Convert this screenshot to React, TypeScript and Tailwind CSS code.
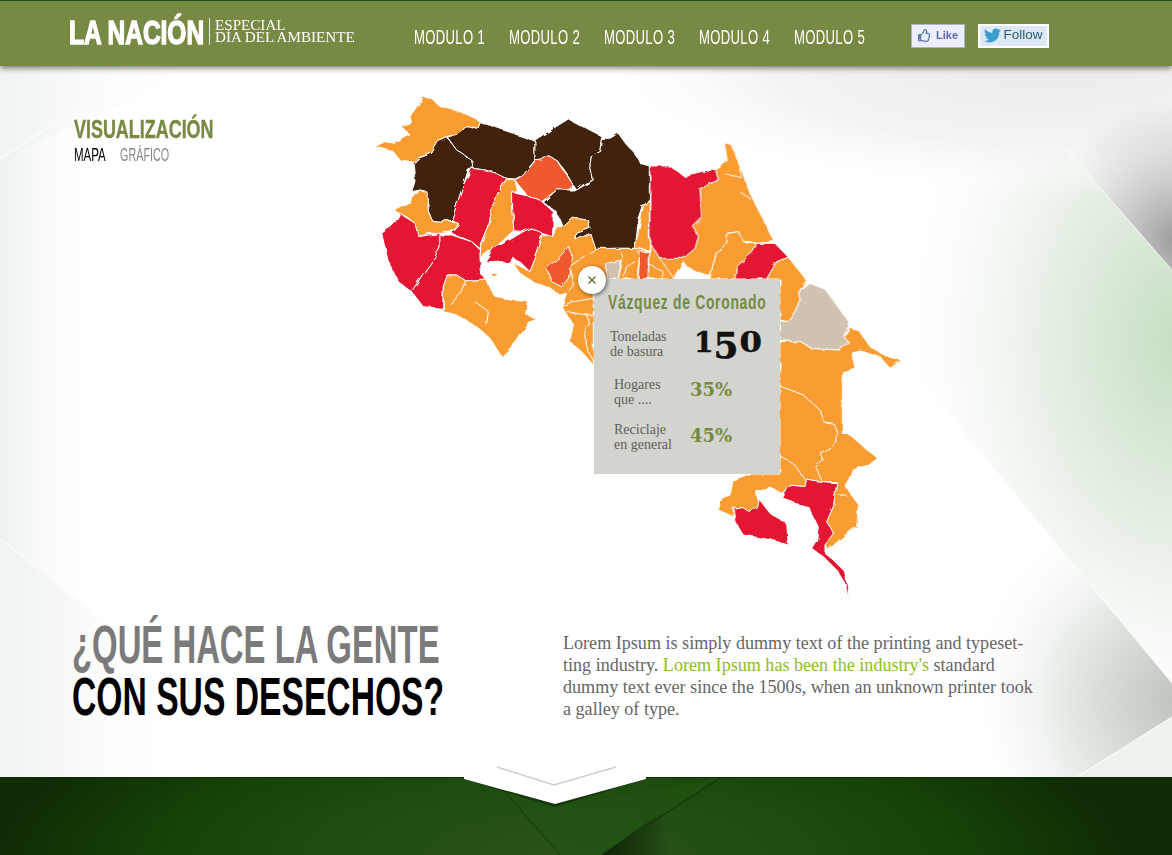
import { X } from "lucide-react";
import { FaTwitter, FaRegThumbsUp } from "react-icons/fa";

const ORANGE = "#f99d33";
const RED = "#e41230";
const BROWN = "#3f210b";
const EMBER = "#ee5a2e";
const BEIGE = "#d2c3b0";

type Region = [string, string];

// coordinates traced from the reference, group offset is in the <g> transform
const westRegions: Region[] = [
  [ORANGE, "190,37 215,40 240,65 300,80 358,108 350,130 320,122 295,150 262,158 235,170 215,205 175,218 165,232 120,225 100,200 45,185 75,170 105,175 150,150 125,125 155,115 150,95"],
  [BROWN, "262,158 290,195 335,225 340,250 325,255 310,300 295,345 275,405 250,400 245,412 220,410 205,375 200,320 180,315 155,320 165,290 160,235 175,220 215,205 235,170"],
  [BROWN, "358,110 525,168 525,225 490,270 465,282 440,280 410,265 375,255 340,250 335,225 290,195 265,160 295,150 320,122 350,130"],
  [BROWN, "525,165 625,102 725,155 720,195 695,210 690,240 700,285 675,295 650,315 640,300 610,250 590,225 565,212 545,225 525,228"],
  [EMBER, "565,212 590,225 610,255 640,300 625,315 590,315 570,330 545,350 500,330 465,285 490,270 525,228 545,225"],
  [BROWN, "775,145 800,180 825,205 840,235 868,243 868,340 850,365 835,410 825,490 770,490 705,492 695,470 690,445 650,465 648,445 690,430 685,405 640,400 610,425 590,380 550,352 590,315 625,315 650,315 700,285 690,240 695,210 720,195 725,160 750,160"],
  [RED, "335,250 375,255 410,265 440,280 405,340 395,375 385,430 360,490 335,470 300,455 275,445 300,420 275,405 295,345 310,300"],
  [ORANGE, "440,282 465,285 472,315 455,320 455,370 462,435 420,475 380,505 360,520 362,490 385,430 395,375 405,340"],
  [RED, "455,320 500,330 545,350 580,380 578,455 545,445 510,430 490,440 462,437 455,370"],
  [ORANGE, "180,315 200,320 205,375 220,410 245,412 255,400 300,420 275,440 245,445 210,445 175,455 165,415 140,395 100,375 150,350"],
  [RED, "120,385 165,415 175,455 240,445 240,490 215,530 190,565 155,620 115,590 85,530 65,445 100,420"],
  [RED, "240,450 275,450 335,470 360,495 360,520 365,570 380,585 320,590 290,570 262,570 250,605 248,670 190,665 155,620 190,565 215,530 240,490"],
  [RED, "510,430 545,445 550,450 530,510 510,560 480,530 460,520 440,535 410,525 375,530 400,490 440,470 490,440"],
  [ORANGE, "578,455 590,425 610,425 640,400 685,405 690,430 650,445 648,465 690,445 705,490 770,490 835,490 868,500 868,582 700,582 700,840 665,800 630,770 640,720 605,665 620,625 600,630 570,610 520,590 480,565 455,530 510,560 530,510 550,450"],
  [EMBER, "625,485 635,510 625,580 605,605 575,590 560,550 600,515"],
  [ORANGE, "868,342 868,495 825,490 850,365"],
  [EMBER, "840,500 868,500 868,582 835,582"],
  [BEIGE, "740,535 785,525 775,582 738,582"],
  [ORANGE, "250,605 262,570 290,570 320,590 380,585 400,630 450,645 505,650 500,690 525,700 495,730 470,770 425,815 390,760 350,725 290,690 250,680"],
  [ORANGE, "385,560 420,570 400,575"],
];

const westLines = [
  "320,590 305,625 260,665",
  "345,650 385,680 380,720",
  "610,660 640,650 700,640",
  "620,680 680,690 700,690",
  "680,690 690,720 670,745 685,800 700,830",
  "625,620 640,600 628,545 705,492",
  "780,495 790,520 775,580",
  "830,495 840,510 830,580",
  "825,530 800,545 790,580",
];

const eastRegions: Region[] = [
  [ORANGE, "30,340 60,385 130,395 100,447 0,447 28,447"],
  [ORANGE, "255,38 275,45 300,110 330,190 380,290 405,335 350,340 305,330 295,305 262,310 260,340 230,365 210,440 140,410 130,395 100,445 60,385 130,385 165,355 175,320 160,290 185,265 180,175 235,150 225,115 265,95"],
  [RED, "30,108 90,108 135,140 200,125 225,115 235,150 180,175 185,265 160,290 175,320 165,355 130,385 60,385 30,340"],
  [ORANGE, "262,310 295,305 310,335 350,340 340,365 290,410 285,447 210,447 230,365 260,340"],
  [RED, "350,340 405,340 445,382 410,395 380,447 285,447 290,410 340,365"],
  [ORANGE, "445,382 500,450 480,480 480,510 465,545 440,575 420,570 420,447 380,447 410,395"],
  [ORANGE, "630,592 660,605 690,650 740,680 785,690 750,715 720,680 660,660 635,665 645,715 607,725 607,780 420,780 420,635 480,635 515,655 600,660 625,635 610,620"],
  [BEIGE, "505,458 555,478 630,580 610,620 625,635 600,660 515,655 480,635 420,632 420,572 440,575 465,545 480,510 480,480"],
];

const eastLines = [
  "30,405 70,425 65,447",
  "130,395 130,447",
  "130,410 210,445",
  "300,110 300,140 260,135",
  "305,190 330,205",
];

const southRegions: Region[] = [
  [ORANGE, "240,0 427,0 427,160 450,165 490,200 530,232 500,255 460,270 450,300 438,320 475,375 470,440 430,470 385,510 375,490 400,460 380,425 400,380 410,305 365,305 320,298 315,320 270,315 245,340 215,325 170,335 175,380 150,400 125,380 100,385 100,410 55,390 65,355 90,345 100,300 140,285 145,282 240,282"],
  [RED, "175,355 190,375 215,405 260,430 265,495 215,480 130,465 105,425 100,385 125,380 150,398 170,380"],
  [RED, "320,298 365,305 410,308 400,380 380,425 400,460 375,495 375,520 405,545 430,570 445,625 445,655 435,610 410,570 370,530 335,505 350,480 355,440 345,420 325,380 285,370 245,350 265,315 315,320"],
];

const southLines = [
  "240,18 310,45 365,95 370,125 400,130 412,160 410,190 360,220 370,240 350,265 365,305",
  "240,228 280,250 315,298",
  "412,345 440,345",
];

function Group({ x, y, regions, lines }: { x: number; y: number; regions: Region[]; lines: string[] }) {
  return (
    <g transform={`translate(${x} ${y}) scale(0.3333)`} stroke="#fff" strokeWidth={3} strokeLinejoin="round">
      {regions.map(([fill, points], i) => (
        <polygon key={i} fill={fill} points={points} />
      ))}
      {lines.map((points, i) => (
        <polyline key={i} fill="none" points={points} />
      ))}
    </g>
  );
}

function CostaRicaMap() {
  return (
    <svg className="absolute left-[360px] top-[19px]" width="560" height="530" viewBox="360 85 560 530">
      <defs>
        <filter id="rough" x="0" y="0" width="100%" height="100%">
          <feTurbulence type="fractalNoise" baseFrequency="0.09" numOctaves="2" seed="4" />
          <feDisplacementMap in="SourceGraphic" scale="5" />
        </filter>
      </defs>
      <g filter="url(#rough)">
        <Group x={360} y={85} regions={westRegions} lines={westLines} />
        <Group x={640} y={130} regions={eastRegions} lines={eastLines} />
        <Group x={700} y={380} regions={southRegions} lines={[]} />
        {/* hides the seam where the south group meets the east group */}
        <rect x="782" y="376" width="59" height="8" fill={ORANGE} />
        <Group x={700} y={380} regions={[]} lines={southLines} />
      </g>
    </svg>
  );
}

function Backdrop() {
  return (
    <svg className="absolute inset-0" width="1172" height="711" viewBox="0 66 1172 711">
      <defs>
        <radialGradient id="topGray" gradientUnits="userSpaceOnUse" cx="1050" cy="66" r="460" gradientTransform="translate(0 47.5) scale(1 .28)">
          <stop offset="0" stopColor="#ebebea" />
          <stop offset=".6" stopColor="#f3f3f2" />
          <stop offset="1" stopColor="#fff" stopOpacity="0" />
        </radialGradient>
        <radialGradient id="wedge" gradientUnits="userSpaceOnUse" cx="1180" cy="240" r="140">
          <stop offset="0" stopColor="#999" />
          <stop offset="1" stopColor="#bbb" stopOpacity="0" />
        </radialGradient>
        <radialGradient id="greenFacet" gradientUnits="userSpaceOnUse" cx="1180" cy="340" r="290" gradientTransform="translate(0 -153) scale(1 1.45)">
          <stop offset="0" stopColor="#c6dec4" />
          <stop offset=".3" stopColor="#dbe9d9" />
          <stop offset=".6" stopColor="#f0f5ef" />
          <stop offset="1" stopColor="#fff" stopOpacity="0" />
        </radialGradient>
        <radialGradient id="lowGray" gradientUnits="userSpaceOnUse" cx="1180" cy="700" r="220">
          <stop offset="0" stopColor="#bcc4bc" />
          <stop offset=".5" stopColor="#e2e8e2" />
          <stop offset="1" stopColor="#fff" stopOpacity="0" />
        </radialGradient>
        <linearGradient id="leftEdge" x1="0" x2="1" y1="0" y2="0">
          <stop offset="0" stopColor="#edf2ee" />
          <stop offset="1" stopColor="#fff" stopOpacity="0" />
        </linearGradient>
        <linearGradient id="leftTop" x1="0" x2="1" y1="0" y2="0">
          <stop offset="0" stopColor="#f0f5f1" />
          <stop offset="1" stopColor="#fff" stopOpacity="0" />
        </linearGradient>
        <linearGradient id="leftLow" x1="0" x2="1" y1="0" y2="0">
          <stop offset="0" stopColor="#eff4f0" />
          <stop offset="1" stopColor="#fff" stopOpacity="0" />
        </linearGradient>
      </defs>
      <rect x="0" y="66" width="1172" height="711" fill="#fff" />
      <rect x="0" y="66" width="100" height="711" fill="url(#leftEdge)" />
      <polygon points="0,66 210,66 0,159" fill="url(#leftTop)" />
      <polygon points="0,538 130,640 200,777 0,777" fill="url(#leftLow)" />
      <polygon points="800,66 1000,66 1067,150 1172,270 1172,683 900,356 800,260" fill="url(#greenFacet)" />
      <rect x="600" y="66" width="572" height="130" fill="url(#topGray)" />
      <polygon points="1000,66 1172,66 1172,270 1067,150" fill="url(#wedge)" />
      <polygon points="900,356 1172,683 1172,717 1077,777 1000,777" fill="url(#lowGray)" />
      <polygon points="1172,717 1172,777 1077,777" fill="#edf2ed" />
      <polyline points="1067,150 1172,270" fill="none" stroke="#fff" strokeOpacity=".8" />
      <polyline points="900,356 1172,683" fill="none" stroke="#fff" strokeOpacity=".7" />
      <polyline points="1077,777 1172,717" fill="none" stroke="#fff" />
      <polyline points="0,159 120,80" fill="none" stroke="#fff" />
      <polyline points="0,538 100,620" fill="none" stroke="#fff" />
    </svg>
  );
}

function Cond({ scale, children }: { scale: string; children: React.ReactNode }) {
  return <span className={`inline-block origin-left whitespace-nowrap ${scale}`}>{children}</span>;
}

function StatRow({ label, second, value, labelWidth, extra }: { label: string; second: string; value: React.ReactNode; labelWidth: string; extra: string }) {
  return (
    <div className={`flex items-center ${extra}`}>
      <p className={`font-['Liberation_Serif',serif] text-[14px] leading-[15px] text-[#5f5f5a] whitespace-nowrap ${labelWidth}`}>
        {label}
        <br />
        {second}
      </p>
      {value}
    </div>
  );
}

export default function App() {
  const navItems = ["MODULO 1", "MODULO 2", "MODULO 3", "MODULO 4", "MODULO 5"];
  return (
    <div className="w-[1172px] h-[855px] overflow-hidden flex flex-col font-['Liberation_Sans',sans-serif]">
      {/* Header */}
      <header className="relative z-10 h-[66px] shrink-0 flex items-center bg-[#778a44] border-t border-[#1c4a12] shadow-[0_2px_6px_rgba(0,0,0,0.55)]">
        <div className="w-[140px] ml-[69px] h-[28px] flex items-center text-white font-bold text-[34px] [-webkit-text-stroke:1.5px_white] leading-none -mt-[4px]">
          <Cond scale="scale-x-[0.72]">LA NACIÓN</Cond>
        </div>
        <div className="w-px h-[27px] bg-white/80 -mt-[4px]" />
        <div className="ml-[5px] w-[199px] font-['Liberation_Serif',serif] text-white text-[14px] leading-[12px] -mt-[4px]">
          <Cond scale="scale-x-[1.08]">ESPECIAL</Cond>
          <br />
          <Cond scale="scale-x-[1.08]">DÍA DEL AMBIENTE</Cond>
        </div>
        <nav className="flex mt-[6px]">
          {navItems.map((item) => (
            <a key={item} className="w-[95px] text-white text-[20px] tracking-[0.5px]">
              <Cond scale="scale-x-[0.655]">{item}</Cond>
            </a>
          ))}
        </nav>
        <div className="ml-[22px] mt-[4px] flex gap-[13px]">
          <button className="w-[54px] h-[24px] flex items-center justify-center gap-[5px] bg-[#eceef9] border border-[#aab4cc] text-[11px] font-bold text-[#5d6cae]">
            <FaRegThumbsUp className="text-[13px] text-[#5d78ae]" />
            Like
          </button>
          <button className="w-[71px] h-[24px] flex items-center justify-center gap-[2px] bg-[#dce8f3] border-2 border-white text-[13.5px] text-[#2c5c7c]">
            <FaTwitter className="text-[17px] text-[#3d9ccf]" />
            Follow
          </button>
        </div>
      </header>

      {/* Visualization */}
      <main className="relative h-[711px] shrink-0 flex flex-col">
        <Backdrop />
        <CostaRicaMap />

        <section className="relative pl-[74px] pt-[49px]">
          <h2 className="text-[26px] leading-[28px] font-bold text-[#778a44] [-webkit-text-stroke:0.4px_#778a44]">
            <Cond scale="scale-x-[0.69]">VISUALIZACIÓN</Cond>
          </h2>
          <div className="mt-[1px] flex text-[18px] leading-[22px]">
            <a className="w-[46px] text-black">
              <Cond scale="scale-x-[0.64]">MAPA</Cond>
            </a>
            <a className="text-[#85878a]">
              <Cond scale="scale-x-[0.6]">GRÁFICO</Cond>
            </a>
          </div>
        </section>

        <section className="relative mt-auto mb-[54px] flex pl-[72px]">
          <h1 className="w-[491px] shrink-0 font-bold text-[53px] leading-[52px] text-black">
            <span className="block text-[#7b7b7b]">
              <Cond scale="scale-x-[0.62]">¿QUÉ HACE LA GENTE</Cond>
            </span>
            <Cond scale="scale-x-[0.635]">CON SUS DESECHOS?</Cond>
          </h1>
          <p className="mt-[13px] font-['Liberation_Serif',serif] text-[18.1px] leading-[22px] text-[#666] whitespace-nowrap">
            Lorem Ipsum is simply dummy text of the printing and typeset-
            <br />
            ting industry. <a className="text-[#8fbe12]">Lorem Ipsum has been the industry's</a> standard
            <br />
            dummy text ever since the 1500s, when an unknown printer took
            <br />
            a galley of type.
          </p>
        </section>

        {/* Popup */}
        <aside className="absolute left-[594px] top-[213px] w-[186px] h-[195px] bg-[#d3d4ce] pt-[10px]">
          <h3 className="pl-[14px] text-[20px] leading-[26px] font-bold text-[#778a44] tracking-[1px]">
            <Cond scale="scale-x-[0.695]">Vázquez de Coronado</Cond>
          </h3>
          <div className="mt-[14px] flex flex-col gap-[15px]">
            <StatRow
              extra="pl-[16px] mb-[3px]"
              labelWidth="w-[84px]"
              label="Toneladas"
              second="de basura"
              value={
                <span className="-translate-y-[8px] font-['DejaVu_Serif',serif] font-bold text-[#111] [-webkit-text-stroke:0.5px_#111] leading-none h-[30px] flex items-baseline">
                  <span className="text-[28px]">1</span>
                  <span className="text-[36px] translate-y-[6px]">5</span>
                  <span className="text-[28px] scale-x-[1.15] ml-[2px]">0</span>
                </span>
              }
            />
            <StatRow
              extra="pl-[20px]"
              labelWidth="w-[76px]"
              label="Hogares"
              second="que ...."
              value={<span className="-translate-y-[3px] font-['DejaVu_Serif',serif] font-bold text-[18px] text-[#778a44]">35%</span>}
            />
            <StatRow
              extra="pl-[20px]"
              labelWidth="w-[76px]"
              label="Reciclaje"
              second="en general"
              value={<span className="-translate-y-[2px] font-['DejaVu_Serif',serif] font-bold text-[18px] text-[#778a44]">45%</span>}
            />
          </div>
        </aside>

        <button className="absolute left-[578px] top-[200px] w-[28px] h-[28px] rounded-full bg-white flex items-center justify-center shadow-[1px_1px_4px_rgba(0,0,0,0.6)]">
          <X size={12} strokeWidth={3} className="text-[#5f7a32]" />
        </button>
      </main>

      {/* Footer */}
      <footer className="relative flex-1 border-t border-[#0d2a05] bg-[radial-gradient(ellipse_560px_170px_at_560px_100%,#2c521a_0%,#1d4c0e_45%,#164306_70%,#0f2c06_100%)]">
        <svg className="absolute left-[440px] top-[-14px]" width="300" height="92" viewBox="440 763 300 92">
          <defs>
            <linearGradient id="seam" x1="0" x2="1" y1="0" y2="0">
              <stop offset="0" stopColor="#081a03" stopOpacity=".85" />
              <stop offset="1" stopColor="#081a03" stopOpacity="0" />
            </linearGradient>
          </defs>
          <polygon points="506,792 556,806 720,777 600,855 560,855" fill="#1f5412" fillOpacity=".55" />
          <polygon points="600,855 660,812 670,855" fill="url(#seam)" />
          <polyline points="506,792 561,855" fill="none" stroke="#12340a" strokeOpacity=".8" />
          <polyline points="720,777 600,855" fill="none" stroke="#0f3008" />
          <polygon points="464,778 555,806 646,778" fill="#0d2a05" fillOpacity=".65" />
          <polygon points="464,763 646,763 646,778 555,803 464,778" fill="#fff" />
          <polyline points="497,766 554,784 616,766" fill="none" stroke="#cfd0cb" strokeWidth="1.5" />
        </svg>
      </footer>
    </div>
  );
}
